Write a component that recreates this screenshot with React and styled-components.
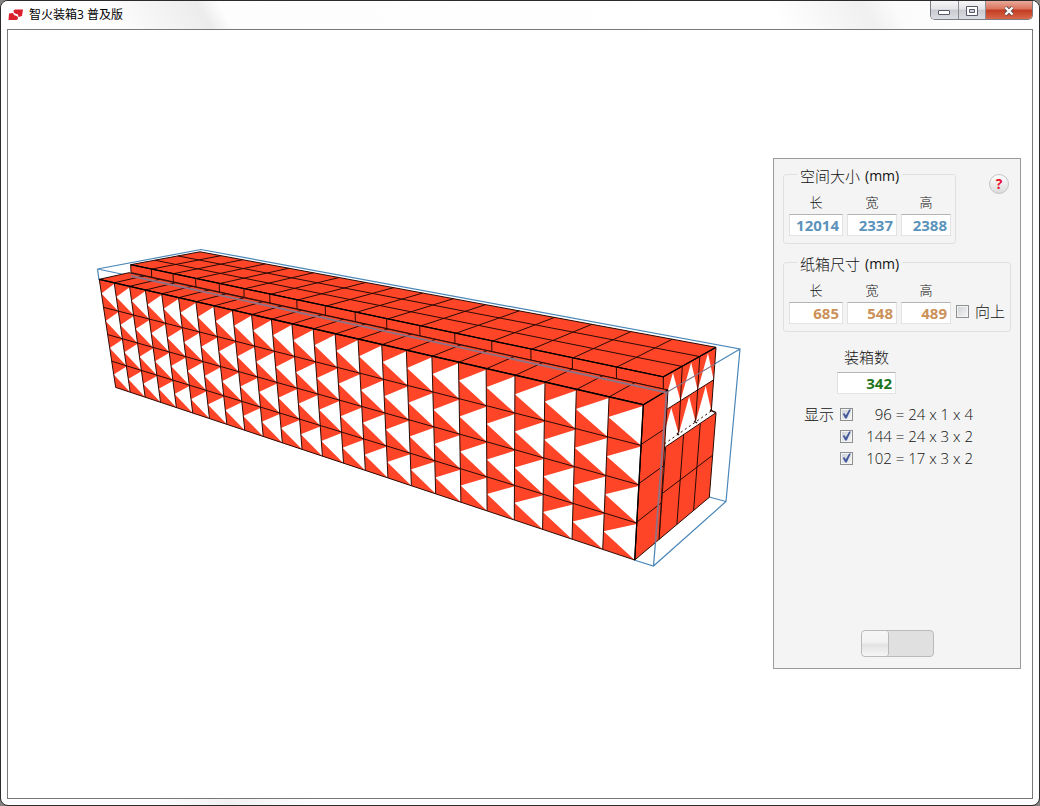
import styled, { createGlobalStyle } from "styled-components";

const RED = "#ff4528";
const LINE = "#2a0a04";
const BLUE = "#4a86b8";
const OVERLAY = "#8d7385";

const GlobalStyle = createGlobalStyle`
  * {
    box-sizing: border-box;
  }

  body {
    margin: 0;
    background: #85827f;
    color: #111;
    font: 14px/20px "Open Sans", "Noto Sans CJK SC", sans-serif;
  }
`;

const Window = styled.div`
  display: flex;
  flex-direction: column;
  min-height: 100vh;
  padding: 0 6px 6px;
  border: 1px solid #2b2b2b;
  border-radius: 8px;
  background: linear-gradient(90deg, #fdfdfd 0%, #fdfdfd 15%, #f1f1f1 22%, #fdfdfd 30%, #fdfdfd 100%);
  overflow: hidden;
`;

const TitleBar = styled.header`
  display: flex;
  align-items: flex-start;
  height: 28px;
  margin: 0 -6px;
  padding: 0 6px 0 7px;
  background: linear-gradient(
    60deg,
    #fff 0%,
    #fdfdfd 11%,
    #ececec 20%,
    #fdfdfd 22%,
    #fff 74%,
    #f0f0f0 83%,
    #fbfbfb 86%,
    #fff 100%
  );
`;

const AppIcon = styled.svg`
  width: 16px;
  height: 16px;
  margin-top: 6px;
`;

const Title = styled.h1`
  flex: 1;
  margin: 4px 0 0 5px;
  font: 12px/20px "Open Sans", "Noto Sans CJK SC", sans-serif;
  color: #000;
`;

const Controls = styled.div`
  display: flex;
  height: 19px;
  border: 1px solid #7b7d85;
  border-top: 0;
  border-radius: 0 0 5px 5px;
  overflow: hidden;
`;

const ControlButton = styled.button`
  display: grid;
  place-items: center;
  width: ${(props) => (props.$close ? "47px" : "27px")};
  padding: ${(props) => (props.$first ? "6px 0 0" : "1px 0 0")};
  border: 0;
  border-left: ${(props) => (props.$first ? "0" : "1px solid #8b8d95")};
  background: ${(props) =>
    props.$close
      ? "linear-gradient(#e9a99a 0%, #d9735c 45%, #c33b20 50%, #d9684a 100%)"
      : "linear-gradient(#f6f6f8 0%, #e4e4e8 45%, #c9cad0 50%, #dcdde2 100%)"};
`;

const Client = styled.main`
  flex: 1;
  display: flex;
  align-items: center;
  padding: 0 11px 1px 0;
  border: 1px solid #767a76;
  background: #fff;
`;

const Scene = styled.svg`
  flex: 1;
  min-width: 0;
  height: auto;
`;

const Panel = styled.form`
  display: flex;
  flex-direction: column;
  flex: none;
  width: 248px;
  min-height: 511px;
  padding: 3px 9px 11px;
  border: 1px solid #9b9b9b;
  background: #f4f4f4;
`;

const TopRow = styled.div`
  display: flex;
  justify-content: space-between;
  align-items: flex-start;
  margin-bottom: 6px;
`;

const HelpButton = styled.button`
  width: 20px;
  height: 20px;
  margin: 12px 2px 0 0;
  padding: 0;
  border: 1px solid #c4c4c4;
  border-radius: 50%;
  background: linear-gradient(#fdfdfd, #dcdcdc);
  color: #e8122c;
  font: bold 14px/18px "Open Sans", sans-serif;
`;

const Group = styled.fieldset`
  display: flex;
  gap: 4px;
  width: fit-content;
  min-width: 0;
  margin: 0;
  padding: 4px 4px 7px 5px;
  border: 1px solid #e0e0e0;
  border-radius: 3px;
`;

const Legend = styled.legend`
  display: flex;
  gap: 5px;
  height: 24px;
  margin-left: 8px;
  padding: 4px 3px 0;
  font: 300 15px/20px "Noto Sans CJK SC", sans-serif;
`;

const Unit = styled.span`
  font: 14px/20px "Open Sans", sans-serif;
`;

const Field = styled.label`
  display: flex;
  flex-direction: column;
  width: ${(props) => (props.$wide ? "54px" : "50px")};
  font: 300 13px/24px "Noto Sans CJK SC", sans-serif;
  text-align: center;
`;

const NumberInput = styled.input`
  width: 100%;
  height: 22px;
  padding: 0 3px 0 0;
  border: 1px solid #e2e2e2;
  border-top-color: #b4b4b4;
  background: #fff;
  color: ${(props) => props.$color};
  font: bold 15px/20px "Open Sans", sans-serif;
  text-align: right;
`;

const CheckBox = styled.input`
  appearance: none;
  flex: none;
  width: 13px;
  height: 13px;
  margin: 0;
  border: 1px solid #8e8f8f;
  background: linear-gradient(135deg, #cdd1d6, #f6f6f6);
  box-shadow: inset 0 0 0 1px #f4f4f4;

  &:checked::after {
    content: "";
    display: block;
    width: 11px;
    height: 11px;
    background: #465a9c;
    clip-path: polygon(15% 48%, 32% 44%, 44% 62%, 74% 8%, 90% 10%, 52% 92%, 38% 92%);
  }
`;

const UprightLabel = styled.label`
  display: flex;
  align-items: center;
  align-self: flex-end;
  gap: 6px;
  height: 26px;
  padding: 0 1px;
  font: 300 15px/20px "Noto Sans CJK SC", sans-serif;
`;

const Count = styled.label`
  display: flex;
  flex-direction: column;
  gap: 5px;
  width: 59px;
  margin: 15px 0 9px 54px;
  font: 300 15px/20px "Noto Sans CJK SC", sans-serif;
  text-align: center;
`;

const Layers = styled.div`
  display: grid;
  grid-template-columns: 36px 133px;
  grid-auto-rows: 22px;
  align-items: center;
  padding-left: 21px;
`;

const LayersTitle = styled.span`
  font: 300 15px/22px "Noto Sans CJK SC", sans-serif;
`;

const LayerLabel = styled.label`
  grid-column: 2;
  display: flex;
  align-items: center;
  justify-content: space-between;
  font: 300 15px/22px "Open Sans", sans-serif;
  white-space: nowrap;
`;

const Toggle = styled.input`
  appearance: none;
  align-self: center;
  width: 73px;
  height: 27px;
  margin: auto 0 0;
  border: 1px solid #b9bab9;
  border-radius: 4px;
  background: #e0e0e0;
  overflow: hidden;

  &::before {
    content: "";
    display: block;
    width: 26px;
    height: 25px;
    border-right: 1px solid #b9b9b9;
    border-radius: 3px;
    background: linear-gradient(#f6f6f6 0%, #f2f2f2 45%, #e3e3e3 55%, #f6f6f6 100%);
  }

  &:checked::before {
    margin-left: auto;
  }
`;

// Maps the unit square onto a quad (tl, tr, br, bl) with perspective.
function project([p0, p1, p2, p3]) {
  const dx1 = p1[0] - p2[0];
  const dx2 = p3[0] - p2[0];
  const dy1 = p1[1] - p2[1];
  const dy2 = p3[1] - p2[1];
  const sx = p0[0] - p1[0] + p2[0] - p3[0];
  const sy = p0[1] - p1[1] + p2[1] - p3[1];
  const det = dx1 * dy2 - dx2 * dy1;
  const g = (sx * dy2 - dx2 * sy) / det;
  const h = (dx1 * sy - sx * dy1) / det;
  const a = p1[0] - p0[0] + g * p1[0];
  const b = p3[0] - p0[0] + h * p3[0];
  const d = p1[1] - p0[1] + g * p1[1];
  const e = p3[1] - p0[1] + h * p3[1];

  return (u, v) => {
    const w = g * u + h * v + 1;
    const x = (a * u + b * v + p0[0]) / w;
    const y = (d * u + e * v + p0[1]) / w;
    return `${x.toFixed(2)},${y.toFixed(2)}`;
  };
}

const MARKS = {
  left: [[0, 0.5], [1, 0.03], [1, 1]],
  up: [[0.5, 0.04], [1, 1], [0, 1]],
};

function Face({ corners, cols, rows, mark }) {
  const at = project(corners);
  const marks = [];
  let grid = "";

  for (let i = 0; i <= cols; i++) {
    grid += `M${at(i / cols, 0)}L${at(i / cols, 1)}`;
  }
  for (let j = 0; j <= rows; j++) {
    grid += `M${at(0, j / rows)}L${at(1, j / rows)}`;
  }
  if (mark) {
    for (let i = 0; i < cols; i++) {
      for (let j = 0; j < rows; j++) {
        marks.push(MARKS[mark].map(([u, v]) => at((i + u) / cols, (j + v) / rows)).join(" "));
      }
    }
  }

  return (
    <g>
      <polygon points={corners.join(" ")} fill={RED} />
      {marks.map((points) => (
        <polygon key={points} points={points} fill="#fff" />
      ))}
      <path d={grid} fill="none" stroke={LINE} strokeWidth="1" />
    </g>
  );
}

function Container() {
  return (
    <Scene viewBox="8 158 765 511" role="img" aria-label="装箱示意图">
      <path
        d="M97.5 269L201 249.5L740 349L726 501.5L653.5 566L634 560M709 497L726 501.5M97.5 269L99 280M97.5 269L131 276M666 392.5L740 349"
        fill="none"
        stroke={BLUE}
        strokeWidth="1.2"
      />
      {/* upper layer: end, top and the strip above the front row */}
      <Face corners={[[663.3, 376.7], [716, 347.5], [711.3, 411], [660.3, 446.7]]} cols={3} rows={2} mark="up" />
      <Face corners={[[200, 251.8], [716, 347.3], [663.3, 376.9], [130.7, 264.7]]} cols={17} rows={3} />
      <Face corners={[[130.7, 264.7], [663.3, 376.9], [663.3, 389], [131, 272.6]]} cols={17} rows={1} />
      {/* lower layer */}
      <polygon points="660.3,445.7 711.3,410 716,412.7 665.7,446.7" fill="#fff" />
      <path d="M660.3 446.7L711.3 411" stroke={LINE} strokeWidth="1" strokeDasharray="2 3" />
      <path d="M677 433l2 2M694 421l3 2M710 410l6 2.7" stroke={LINE} strokeWidth="1.4" />
      <Face corners={[[665.7, 446.7], [716, 412.7], [709.3, 497.3], [659, 539.5]]} cols={3} rows={2} />
      {/* front row */}
      <Face corners={[[129, 272.7], [668, 390], [643.3, 404.7], [99.3, 279.3]]} cols={24} rows={1} />
      <Face corners={[[643.3, 404.7], [668, 390], [659, 539.5], [634.7, 560]]} cols={1} rows={4} />
      <Face corners={[[99.3, 279.5], [643.3, 404.7], [634.7, 560], [115.7, 387.4]]} cols={24} rows={4} mark="left" />
      <path
        d="M130.7 264.7L663.3 376.9L716 347.3M99.3 279.3L643.3 404.7L668 390M643.3 404.7L634.7 560"
        fill="none"
        stroke="#000"
        strokeWidth="1.3"
      />
      <path d="M131 276L666.5 392.5L655.5 542" fill="none" stroke={OVERLAY} strokeWidth="1.8" />
      <path d="M666.5 392.5L715 364" fill="none" stroke={OVERLAY} strokeWidth="1.2" />
      <path d="M655.5 542L653.5 566" stroke={BLUE} strokeWidth="1.2" />
    </Scene>
  );
}

function SizeFields({ values, color }) {
  return ["长", "宽", "高"].map((name, i) => (
    <Field key={name} $wide={i === 0}>
      {name}
      <NumberInput defaultValue={values[i]} $color={color} />
    </Field>
  ));
}

const layers = ["96 = 24 x 1 x 4", "144 = 24 x 3 x 2", "102 = 17 x 3 x 2"];

export default function App() {
  return (
    <Window>
      <GlobalStyle />
      <TitleBar>
        <AppIcon viewBox="0 0 16 16" aria-hidden="true">
          <path d="M5.500 3.500L7 2.500H15L14 9L10.500 10L10 7.500L6 6z" fill="#d9202c" />
          <path d="M1 6.500L5 6L6 8L9.500 9.500L10 12L8.500 13H.500z" fill="#d9202c" />
        </AppIcon>
        <Title>智火装箱3 普及版</Title>
        <Controls>
          <ControlButton $first aria-label="最小化">
            <svg width="13" height="6" viewBox="0 0 13 6">
              <rect x="0.500" y="0.500" width="11" height="4" rx="0.500" fill="#fff" stroke="#555866" />
            </svg>
          </ControlButton>
          <ControlButton aria-label="最大化">
            <svg width="12" height="10" viewBox="0 0 12 10">
              <path d="M.5.500h11v9H.5z" fill="#fff" stroke="#555866" />
              <path d="M3.500 3.500h5v3h-5z" fill="#d0d1d8" stroke="#555866" />
            </svg>
          </ControlButton>
          <ControlButton $close aria-label="关闭">
            <svg width="12" height="10" viewBox="0 0 12 10">
              <path d="M2.500 1.500L9.500 8.500M9.500 1.500L2.500 8.500" stroke="#5e4a50" strokeWidth="4" />
              <path d="M2.500 1.500L9.500 8.500M9.500 1.500L2.500 8.500" stroke="#fff" strokeWidth="2.400" />
            </svg>
          </ControlButton>
        </Controls>
      </TitleBar>
      <Client>
        <Container />
        <Panel>
          <TopRow>
            <Group>
              <Legend>
                空间大小 <Unit>(mm)</Unit>
              </Legend>
              <SizeFields values={[12014, 2337, 2388]} color="#5b93bb" />
            </Group>
            <HelpButton type="button">?</HelpButton>
          </TopRow>
          <Group>
            <Legend>
              纸箱尺寸 <Unit>(mm)</Unit>
            </Legend>
            <SizeFields values={[685, 548, 489]} color="#cb9158" />
            <UprightLabel>
              <CheckBox type="checkbox" />
              向上
            </UprightLabel>
          </Group>
          <Count>
            装箱数
            <NumberInput defaultValue="342" $color="#1e741e" readOnly />
          </Count>
          <Layers>
            <LayersTitle>显示</LayersTitle>
            {layers.map((layer) => (
              <LayerLabel key={layer}>
                <CheckBox type="checkbox" defaultChecked />
                {layer}
              </LayerLabel>
            ))}
          </Layers>
          <Toggle type="checkbox" role="switch" aria-label="切换" />
        </Panel>
      </Client>
    </Window>
  );
}
